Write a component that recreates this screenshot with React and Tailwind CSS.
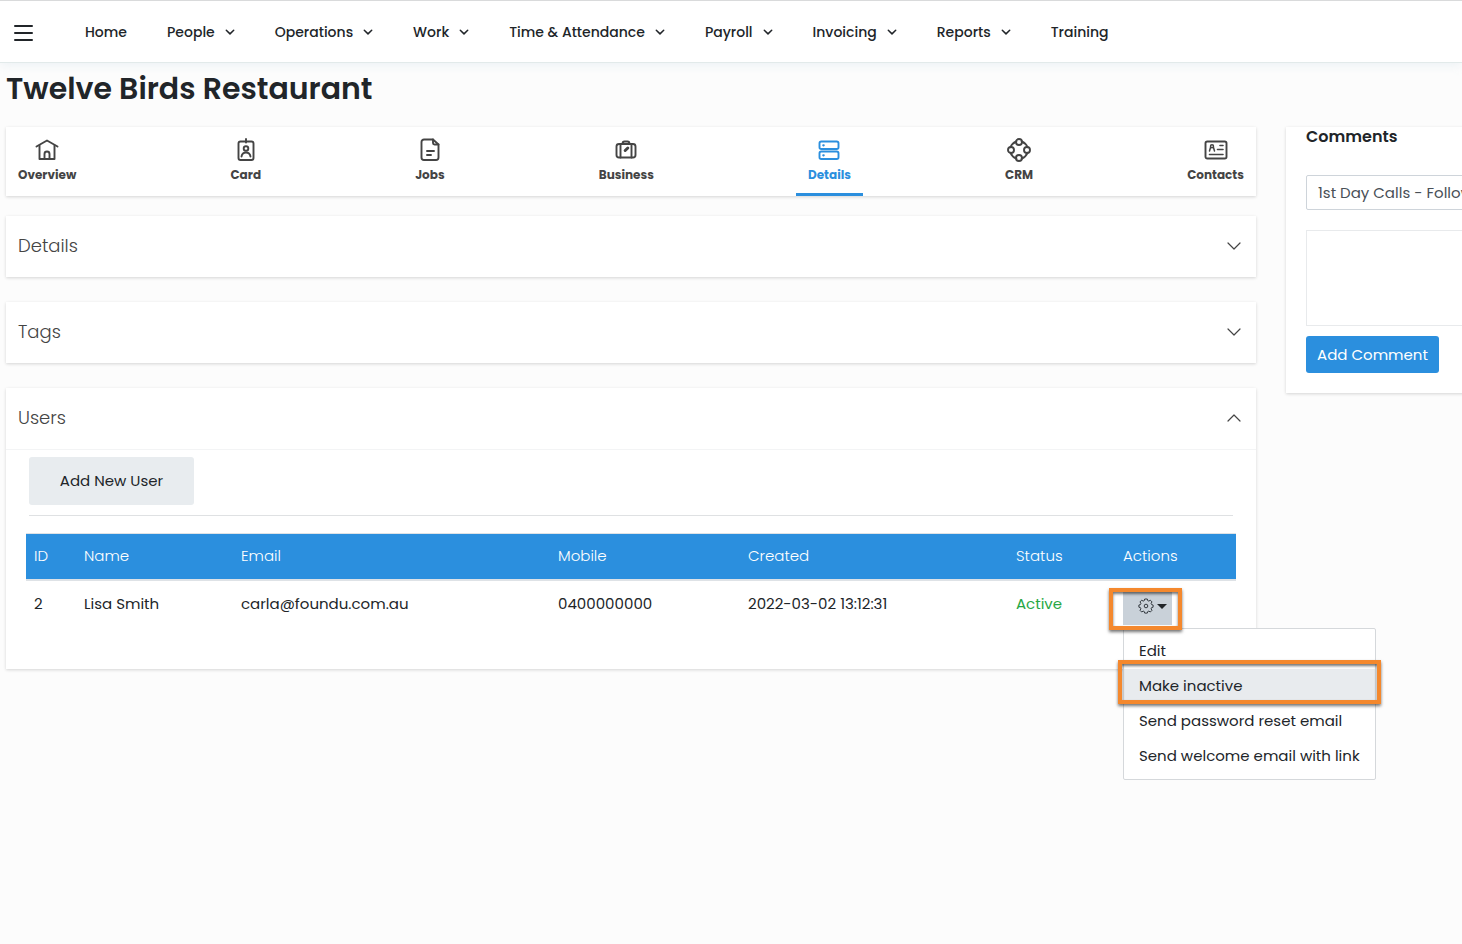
import { ChevronDown, ChevronUp } from "lucide-react";

const navItems = [
  { label: "Home" },
  { label: "People", menu: true },
  { label: "Operations", menu: true },
  { label: "Work", menu: true },
  { label: "Time & Attendance", menu: true },
  { label: "Payroll", menu: true },
  { label: "Invoicing", menu: true },
  { label: "Reports", menu: true },
  { label: "Training" },
];

const icons = {
  Overview: (
    <>
      <path d="M1.5 8.5 12 2.5l10.5 6" />
      <path d="M4.5 7.5V21h15V7.5" />
      <path d="M9.5 21v-5a2.5 2.5 0 0 1 5 0v5" />
    </>
  ),
  Card: (
    <>
      <rect x="4.5" y="3.5" width="15" height="18.5" rx="2" />
      <path d="M12 1v3.5" />
      <circle cx="12" cy="10.5" r="2.3" />
      <path d="M7.5 18.5c.5-2.8 2.2-4 4.5-4s4 1.2 4.5 4" />
    </>
  ),
  Jobs: (
    <>
      <path d="M15 1.500H6A2.500 2.500 0 0 0 3.500 4v15.500A2.500 2.500 0 0 0 6 22h12a2.500 2.500 0 0 0 2.500-2.500V6.500z" />
      <path d="M15 1.500V5a1.500 1.500 0 0 0 1.500 1.500h4" />
      <path d="M9 13h7M9 17h4" />
    </>
  ),
  Business: (
    <>
      <rect x="2.5" y="6" width="19" height="13.5" rx="2.5" />
      <path d="M6.5 6v13.5M17.5 6v13.5" />
      <path d="M8.5 6c0-2 1-2.500 2-2.500h3c1 0 2 .5 2 2.500" />
      <path d="M11.2 12.500 13.800 10" strokeWidth="3" />
    </>
  ),
  Details: (
    <>
      <rect x="2.5" y="3.5" width="19" height="7.5" rx="1.8" />
      <rect x="2.5" y="13.5" width="19" height="7.5" rx="1.8" />
      <path d="M6.3 7.300h.4M6.300 17.300h.4" strokeWidth="2.2" />
    </>
  ),
  CRM: (
    <>
      <circle cx="12" cy="4" r="3" />
      <circle cx="12" cy="20" r="3" />
      <circle cx="4" cy="12" r="3" />
      <circle cx="20" cy="12" r="3" />
      <path d="M9.300 3.500C6.500 4.600 4.600 6.500 3.500 9.200M14.700 3.500c2.800 1.100 4.700 3 5.800 5.700M3.500 14.800c1.100 2.700 3 4.600 5.800 5.700M20.500 14.800c-1.100 2.700-3 4.600-5.800 5.700" />
    </>
  ),
  Contacts: (
    <>
      <rect x="1.5" y="3.5" width="21" height="17" rx="1.8" />
      <path d="M5.500 13l1-3.500M10.500 13l-1-3.500" strokeWidth="1.5" />
      <circle cx="8" cy="8.300" r="1.5" strokeWidth="1.5" />
      <path d="M16 7.500h3M13.500 11.500H19M5.500 16.500H19" strokeWidth="1.6" />
    </>
  ),
};

const tabs = ["Overview", "Card", "Jobs", "Business", "Details", "CRM", "Contacts"];
const actions = ["Edit", "Make inactive", "Send password reset email", "Send welcome email with link"];

function NavBar() {
  return (
    <header className="flex h-[63px] items-center border-t border-b border-t-[#d9dadb] border-b-[#e2eaea] bg-white pl-[14px] shadow-[0_2px_10px_rgba(200,220,230,0.3)]">
      <button type="button" aria-label="Toggle menu" className="flex w-[19px] flex-col gap-[5px] pt-[2px]">
        <span className="h-[2px] w-full rounded-full bg-[#212529]" />
        <span className="h-[2px] w-full rounded-full bg-[#212529]" />
        <span className="h-[2px] w-full rounded-full bg-[#212529]" />
      </button>
      <nav className="ml-[52px] flex items-center gap-10 text-sm font-medium whitespace-nowrap">
        {navItems.map((item) => (
          <a key={item.label} href="#" className="flex items-center gap-[10px]">
            {item.label}
            {item.menu && (
              <svg viewBox="0 0 10 6" className="h-[6px] w-[10px]" fill="none" stroke="currentColor" strokeWidth="1.5" strokeLinecap="round" strokeLinejoin="round">
                <path d="M1.300 1.200 5 4.900l3.700-3.700" />
              </svg>
            )}
          </a>
        ))}
      </nav>
    </header>
  );
}

function TabBar() {
  return (
    <nav className="flex h-[69px] justify-between bg-white shadow-[0_1px_3px_rgba(0,0,0,0.16)]">
      {tabs.map((tab) => (
        <a
          key={tab}
          href="#"
          className={
            tab === "Details"
              ? "flex flex-col items-center gap-[5px] border-b-3 border-[#2b8fde] px-3 pt-[11px] text-[#2b8fde]"
              : "flex flex-col items-center gap-[5px] border-b-3 border-transparent px-3 pt-[11px] text-[#444]"
          }
        >
          <svg
            viewBox="0 0 24 24"
            className="size-6"
            fill="none"
            stroke="currentColor"
            strokeWidth="1.9"
            strokeLinecap="round"
            strokeLinejoin="round"
          >
            {icons[tab]}
          </svg>
          <span className="text-xs font-bold">{tab}</span>
        </a>
      ))}
    </nav>
  );
}

function Panel({ title, open, children }) {
  const Chevron = open ? ChevronUp : ChevronDown;
  return (
    <section className="bg-white shadow-[0_1px_3px_rgba(0,0,0,0.16)]">
      <h2>
        <button type="button" aria-expanded={!!open} className="flex h-[61px] w-full items-center justify-between pr-[10px] pb-px pl-3 text-lg font-light text-[#444]">
          {title}
          <Chevron size={24} strokeWidth={1.2} />
        </button>
      </h2>
      {children}
    </section>
  );
}

function ActionsMenu() {
  return (
    <div className="relative w-[49px]">
      <button type="button" aria-label="User actions" className="flex h-[37px] w-full items-center justify-center gap-[3px] bg-[#c9d1d9] pl-[10px]">
        <svg viewBox="0 0 16 16" className="size-4" fill="none" stroke="#343a40" strokeWidth="1">
          <path
            strokeLinejoin="round"
            d="M6.700 1h2.600l.4 1.600 1.100.5 1.500-.9 1.700 1.700-.9 1.500.5 1.200 1.500.4v2.200l-1.500.4-.5 1.200.9 1.500-1.700 1.700-1.500-.9-1.100.5-.4 1.500H6.700l-.4-1.500-1.100-.5-1.500.9L2 12.300l.9-1.500-.5-1.200L.9 9.200V7l1.500-.4.5-1.200L2 3.900l1.700-1.700 1.500.9 1.100-.5z"
          />
          <circle cx="8" cy="8" r="1.8" />
        </svg>
        <svg viewBox="0 0 10 5" className="h-[5px] w-[10px]" fill="#212529">
          <path d="M0 0h10L5 5z" />
        </svg>
      </button>
      <ul className="absolute top-10 left-0 z-10 w-[253px] rounded-xs border border-[#d5d8db] bg-white py-[5px]">
        {actions.map((action) => (
          <li key={action} className="relative">
            <button
              type="button"
              className={
                action === "Make inactive"
                  ? "h-[35px] w-full bg-[#e8ebee] px-[15px] text-left whitespace-nowrap"
                  : "h-[35px] w-full px-[15px] text-left whitespace-nowrap"
              }
            >
              {action}
            </button>
            {action === "Make inactive" && (
              <span className="pointer-events-none absolute -inset-x-[6px] -top-[9px] bottom-0 border-4 border-[#f4882d] shadow-[0_2px_3px_rgba(0,0,0,0.55),inset_0_2px_3px_rgba(0,0,0,0.55)]" />
            )}
          </li>
        ))}
      </ul>
      <span className="pointer-events-none absolute top-0 -right-[10px] -bottom-[5px] -left-[14px] z-20 border-4 border-[#f4882d] shadow-[0_2px_3px_rgba(0,0,0,0.55),inset_0_2px_3px_rgba(0,0,0,0.55)]" />
    </div>
  );
}

function UsersTable() {
  return (
    <table className="w-full table-fixed text-left">
      <colgroup>
        <col className="w-[50px]" />
        <col className="w-[157px]" />
        <col />
        <col className="w-[190px]" />
        <col className="w-[268px]" />
        <col className="w-[107px]" />
        <col className="w-[121px]" />
      </colgroup>
      <thead>
        <tr className="h-[46px] border-t border-b-2 border-[#dee2e6] bg-[#2b8fde] text-white">
          {["ID", "Name", "Email", "Mobile", "Created", "Status", "Actions"].map((head) => (
            <th key={head} className="px-2 font-light">
              {head}
            </th>
          ))}
        </tr>
      </thead>
      <tbody>
        <tr className="align-top">
          <td className="px-2 py-3">2</td>
          <td className="px-2 py-3">Lisa Smith</td>
          <td className="px-2 py-3">carla@foundu.com.au</td>
          <td className="px-2 py-3">0400000000</td>
          <td className="px-2 py-3">2022-03-02 13:12:31</td>
          <td className="px-2 py-3 text-[#28a745]">Active</td>
          <td className="px-2 pt-[7px]">
            <ActionsMenu />
          </td>
        </tr>
      </tbody>
    </table>
  );
}

function Comments() {
  return (
    <section className="w-[340px] bg-white px-5 pb-5 shadow-[0_1px_3px_rgba(0,0,0,0.16)]">
      <h2 className="text-base leading-5 font-semibold">Comments</h2>
      <select aria-label="Comment type" className="mt-7 block h-[35px] w-full appearance-none rounded-xs border border-[#ced4da] bg-white px-[11px] text-[#495057]">
        <option>1st Day Calls - Follow Up</option>
      </select>
      <textarea aria-label="Comment" className="mt-5 block h-24 w-full resize-none border border-[#e8eaec]" />
      <button type="button" className="mt-[10px] h-[37px] w-[133px] rounded-[3px] bg-[#2b8fde] text-white">
        Add Comment
      </button>
    </section>
  );
}

export default function App() {
  return (
    <div className="min-h-screen overflow-x-hidden bg-[#fcfcfc] font-[Poppins,Inter,sans-serif] text-[15px] leading-[22px] text-[#212529]">
      <NavBar />
      <main className="pl-[6px]">
        <h1 className="pt-[6px] text-[30px] leading-10 font-semibold">Twelve Birds Restaurant</h1>
        <div className="mt-[18px] flex items-start gap-[30px]">
          <div className="min-w-0 flex-1">
            <TabBar />
            <div className="mt-5 flex flex-col gap-[25px]">
              <Panel title="Details" />
              <Panel title="Tags" />
              <Panel title="Users" open>
                <div className="border-t border-[#f3f4f5] px-5 pt-[7px] pb-[30px]">
                  <div className="mx-[3px] border-b border-[#dfe1e3] pb-[10px]">
                    <button type="button" className="h-12 w-[165px] rounded-[3px] bg-[#e8ecef]">
                      Add New User
                    </button>
                  </div>
                  <div className="mt-[17px] pb-3">
                    <UsersTable />
                  </div>
                </div>
              </Panel>
            </div>
          </div>
          <aside className="w-44 shrink-0">
            <Comments />
          </aside>
        </div>
      </main>
    </div>
  );
}
